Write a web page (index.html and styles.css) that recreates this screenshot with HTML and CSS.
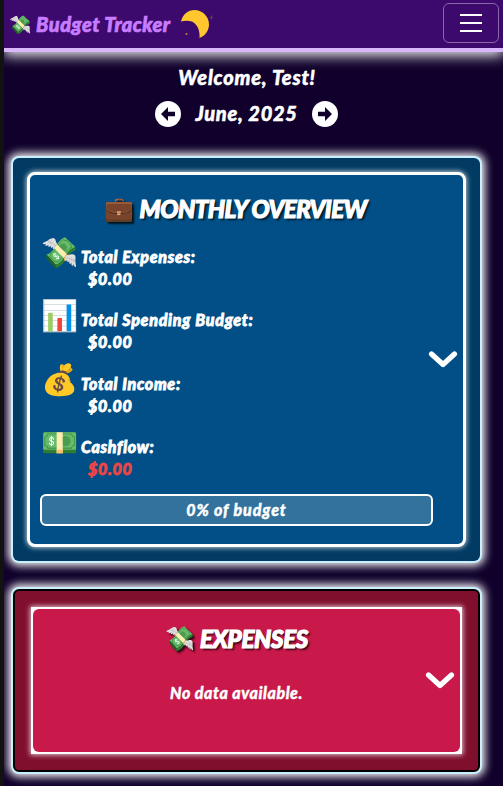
FILE: index.html
```html
<!DOCTYPE html>
<html lang="en">
<head>
<meta charset="utf-8">
<title>Budget Tracker</title>
<link rel="stylesheet" href="styles.css">
</head>
<body>
<div class="app">
  <header class="navbar">
    <span class="brand"><span class="brand-icon">💸</span><span class="brand-name">Budget Tracker</span></span>
    <svg class="moon" width="33" height="32" viewBox="0 0 33 32"><path fill="#ffc62d" d="M1 12.500C3 5 8 1 14.500 1C22.500 1 29 7.500 29 15.500C29 21.500 25 27 19.500 29C20 21.500 17.500 15.500 12 12.500C8 11.200 4.500 11.500 1 12.500Z"/><circle cx="6.500" cy="25" r="1" fill="#c98a32"/><path d="M31.500 6.500v4M29.800 8.500h3" stroke="#70431f"/></svg>
    <button class="menu" aria-label="Menu"><i></i><i></i><i></i></button>
  </header>
  <main>
    <h1 class="welcome"><span>Welcome, Test!</span></h1>
    <div class="month">
      <svg width="26" height="26" viewBox="0 0 26 26"><circle cx="13" cy="13" r="13" fill="#fff"/><path fill="#10002b" d="M6 13l7-7v4.700h7v4.600h-7v4.700z"/></svg>
      <span class="month-name">June, 2025</span>
      <svg width="26" height="26" viewBox="0 0 26 26"><circle cx="13" cy="13" r="13" fill="#fff"/><path fill="#10002b" d="M20 13l-7-7v4.700h-7v4.600h7v4.700z"/></svg>
    </div>
    <section class="card overview">
      <div class="panel">
        <div class="content">
          <h2 class="title"><span class="title-icon">💼</span><span class="title-overview">MONTHLY OVERVIEW</span></h2>
          <div class="item"><span class="emoji">💸</span><div><p class="label">Total Expenses:</p><p class="value">$0.00</p></div></div>
          <div class="item"><span class="emoji">📊</span><div><p class="label">Total Spending Budget:</p><p class="value">$0.00</p></div></div>
          <div class="item"><span class="emoji">💰</span><div><p class="label">Total Income:</p><p class="value">$0.00</p></div></div>
          <div class="item"><span class="emoji">💵</span><div><p class="label">Cashflow:</p><p class="value negative">$0.00</p></div></div>
          <div class="progress"><span>0% of budget</span></div>
        </div>
        <svg class="chevron" width="30" height="20" viewBox="0 0 30 20"><path d="M3.500 4L15 14.500L26.500 4" fill="none" stroke="#fff" stroke-width="5.200" stroke-linecap="round" stroke-linejoin="round"/></svg>
      </div>
    </section>
    <section class="card expenses">
      <div class="frame">
        <div class="panel">
          <div class="content">
            <h2 class="title"><span class="title-icon">💸</span><span class="title-expenses">EXPENSES</span></h2>
            <p class="empty"><span>No data available.</span></p>
          </div>
          <svg class="chevron" width="30" height="20" viewBox="0 0 30 20"><path d="M3.500 4L15 14.500L26.500 4" fill="none" stroke="#fff" stroke-width="5.200" stroke-linecap="round" stroke-linejoin="round"/></svg>
        </div>
      </div>
    </section>
  </main>
</div>
</body>
</html>
```
FILE: styles.css
```css
* { box-sizing: border-box; margin: 0; padding: 0; }
body {
  height: 786px; overflow: hidden; padding-left: 4px; background: #121212;
  font-family: Lato, "Noto Color Emoji", sans-serif;
  font-style: italic; font-weight: 900; color: #fff;
}
.app { height: 786px; background: #10002b; overflow: hidden; }
.navbar {
  height: 52px; background: #3c096c; border-bottom: 4px solid #dab6fc;
  box-shadow: 0 4px 12px rgba(255,255,255,.9);
  display: flex; align-items: center; padding: 0 4px 0 5px;
}
.brand { display: flex; align-items: center; color: #c77dff; white-space: nowrap; }
.brand-icon { width: 27px; font-size: 18px; font-style: normal; }
.brand-name { width: 144px; font-size: 20px; letter-spacing: .5px; -webkit-text-stroke: .7px; }
.moon { margin: 2px 0 0; }
.menu {
  width: 56px; height: 40px; margin: -2px 0 0 auto; border: 1px solid #8b68a8; border-radius: 6px;
  background: none; display: flex; flex-direction: column; align-items: center; justify-content: center; gap: 6px;
}
.menu i { width: 22px; height: 2px; background: #fff; }
.welcome {
  margin-top: 12px; padding-right: 13px; font-size: 20px; line-height: 26px;
  letter-spacing: .8px; text-align: center; font-weight: 900; -webkit-text-stroke: .5px;
}
.month { height: 26px; margin-top: 11px; padding-right: 14px; display: flex; justify-content: center; align-items: center; }
.month-name {
  width: 131px; text-align: center; font-size: 20px; line-height: 24px;
  letter-spacing: .7px; -webkit-text-stroke: .5px; margin-top: -2px;
}
.card { width: 467px; margin-left: 9px; border-radius: 6px; box-shadow: 0 0 0 2px #caf0ff, 0 0 8px 5px rgba(255,255,255,.95); }
.overview { height: 403px; margin-top: 31px; padding: 14px; background: #013a63; }
.panel { display: flex; align-items: center; }
.overview .panel {
  height: 375px; border: 3px solid #fff; border-radius: 8px; background: #014f86;
  padding: 0 5px 0 10px; box-shadow: 0 0 5px 1px rgba(255,255,255,.7);
}
.content { width: 393px; align-self: stretch; flex: none; }
.chevron { margin: 0 0 0 -5px; flex: none; }
.title {
  display: flex; justify-content: center; align-items: center; height: 32px; font-size: 24px;
  font-weight: 900; text-shadow: 2px 2px 2px rgba(0,0,0,.75); white-space: nowrap;
}
.title-icon { width: 35px; font-size: 24px; font-style: normal; }
.title-overview { width: 229px; letter-spacing: -.5px; -webkit-text-stroke: 1.200px; }
.overview .title { margin-top: 17px; margin-bottom: 11px; }
.item { height: 63.300px; display: flex; }
.emoji { width: 41px; padding-left: 1px; font-size: 30px; line-height: 33px; font-style: normal; }
.item > div { padding-top: 11px; }
.label, .value {
  font-size: 16px; line-height: 22px; white-space: nowrap;
  letter-spacing: .72px; -webkit-text-stroke: .8px;
}
.value { padding-left: 7px; }
.negative { color: #ef4444; }
.progress {
  height: 32px; margin-top: 6px; border: 2px solid #fff; border-radius: 6px; background: #34729e;
  text-align: center; font-size: 16px; line-height: 27px; letter-spacing: .9px; -webkit-text-stroke: .4px;
}
.expenses { height: 183px; margin-top: 28px; padding: 16px; border: 2px solid #000; background: #800e2d; }
.frame { width: 431px; padding: 2px; background: #fff; box-shadow: 0 0 5px 1px rgba(255,255,255,.75); }
.expenses .panel { height: 143px; border-radius: 6px; background: #c9184a; padding-left: 7px; }
.expenses .chevron { margin-left: -8px; }
.expenses .title { margin-top: 13px; }
.title-expenses { width: 108px; letter-spacing: -.3px; -webkit-text-stroke: 1.200px; }
.empty { margin-top: 28px; text-align: center; font-size: 16px; line-height: 22px; letter-spacing: .55px; -webkit-text-stroke: .4px; }
```
